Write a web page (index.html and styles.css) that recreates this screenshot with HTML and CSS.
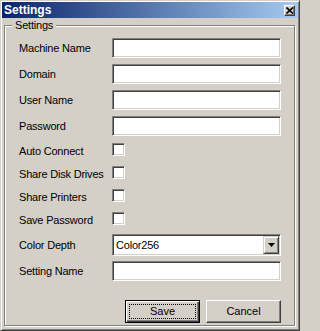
FILE: index.html
```html
<!DOCTYPE html>
<html>
<head>
<meta charset="utf-8">
<link rel="stylesheet" href="styles.css">
</head>
<body>
<div class="window">
  <div class="titlebar">
    <span class="title">Settings</span>
    <span class="close-btn">
      <svg width="8" height="7" viewBox="0 0 8 7"><path d="M0.5 0.5 L7 6.5 M7 0.5 L0.5 6.5" stroke="#000" stroke-width="1.6" fill="none"/></svg>
    </span>
  </div>
  <div class="group">
    <span class="legend">Settings</span>
    <div class="row">
      <label class="label">Machine Name</label>
      <input class="field" type="text">
    </div>
    <div class="row">
      <label class="label">Domain</label>
      <input class="field" type="text">
    </div>
    <div class="row">
      <label class="label">User Name</label>
      <input class="field" type="text">
    </div>
    <div class="row last-text">
      <label class="label">Password</label>
      <input class="field" type="password">
    </div>
    <div class="row check-row">
      <label class="label">Auto Connect</label>
      <input class="check" type="checkbox">
    </div>
    <div class="row check-row">
      <label class="label">Share Disk Drives</label>
      <input class="check" type="checkbox">
    </div>
    <div class="row check-row">
      <label class="label">Share Printers</label>
      <input class="check" type="checkbox">
    </div>
    <div class="row check-row last-check">
      <label class="label">Save Password</label>
      <input class="check" type="checkbox">
    </div>
    <div class="row combo-row">
      <label class="label">Color Depth</label>
      <div class="combo">
        <span class="combo-text">Color256</span>
        <span class="combo-btn">
          <svg width="7" height="4" viewBox="0 0 7 4"><polygon points="0,0 7,0 3.5,4" fill="#000"/></svg>
        </span>
      </div>
    </div>
    <div class="row setting-row">
      <label class="label">Setting Name</label>
      <input class="field" type="text">
    </div>
    <div class="buttons">
      <button class="btn btn-default"><span class="focus">Save</span></button>
      <button class="btn"><span class="plain">Cancel</span></button>
    </div>
  </div>
</div>
</body>
</html>
```

FILE: styles.css
```css
html, body {
  margin: 0;
  padding: 0;
  background: #D4D0C8;
}

body {
  font-family: "Liberation Sans", Arial, sans-serif;
  font-size: 11px;
  color: #000;
}

.window {
  width: 300px;
  height: 331px;
  box-sizing: border-box;
  background: #D4D0C8;
  border: 1px solid;
  border-color: #D4D0C8 #404040 #404040 #D4D0C8;
  box-shadow: inset 1px 1px #fff, inset -1px -1px #808080;
  padding: 1px;
  display: flex;
  flex-direction: column;
}

.titlebar {
  height: 16px;
  flex: none;
  background: linear-gradient(to right, #0A246A, #A6CAF0);
  display: flex;
  align-items: center;
  justify-content: space-between;
  padding: 0 3px 0 2px;
}

.title {
  color: #fff;
  font-weight: bold;
  font-size: 12px;
  line-height: 16px;
}

.close-btn {
  width: 11px;
  height: 11px;
  box-sizing: border-box;
  background: #D4D0C8;
  border: 1px solid;
  border-color: #fff #404040 #404040 #fff;
  box-shadow: inset -1px -1px #808080;
  display: flex;
  align-items: center;
  justify-content: center;
}

.close-btn svg {
  display: block;
}

.group {
  flex: 1;
  margin: 7px 3px 3px 2px;
  border: 1px solid #808080;
  box-shadow: inset 1px 1px #fff, 1px 1px #fff;
  position: relative;
  padding: 12px 13px 0 14px;
  display: flex;
  flex-direction: column;
}

.legend {
  position: absolute;
  top: -7px;
  left: 7px;
  padding: 0 3px;
  line-height: 13px;
  background: #D4D0C8;
  letter-spacing: -0.2px;
}

.row {
  display: flex;
  align-items: center;
  height: 20px;
  margin-bottom: 6px;
}

.row.last-text {
  margin-bottom: 7px;
}

.label {
  width: 93px;
  flex: none;
  white-space: nowrap;
  letter-spacing: -0.2px;
  line-height: 13px;
}

.field {
  flex: 1;
  min-width: 0;
  height: 20px;
  box-sizing: border-box;
  margin: 0;
  padding: 0 3px;
  background: #fff;
  border: 1px solid;
  border-color: #808080 #fff #fff #808080;
  box-shadow: inset 1px 1px #404040, inset -1px -1px #D4D0C8;
  outline: none;
  font: inherit;
}

.check-row {
  height: 13px;
  margin-bottom: 10px;
}

.check-row .label {
  padding-top: 3px;
}

.check-row.last-check {
  margin-bottom: 9px;
}

.check {
  -webkit-appearance: none;
  appearance: none;
  width: 13px;
  height: 13px;
  box-sizing: border-box;
  margin: 0;
  background: #fff;
  border: 1px solid;
  border-color: #808080 #fff #fff #808080;
  box-shadow: inset 1px 1px #404040, inset -1px -1px #D4D0C8;
}

.combo-row {
  height: 22px;
  margin-bottom: 5px;
}

.combo {
  flex: 1;
  height: 22px;
  box-sizing: border-box;
  background: #fff;
  border: 1px solid;
  border-color: #808080 #fff #fff #808080;
  box-shadow: inset 1px 1px #404040, inset -1px -1px #D4D0C8;
  padding: 1px;
  display: flex;
  align-items: center;
}

.combo-text {
  flex: 1;
  padding-left: 2px;
  letter-spacing: -0.2px;
}

.combo-btn {
  width: 16px;
  height: 18px;
  box-sizing: border-box;
  background: #D4D0C8;
  border: 1px solid;
  border-color: #D4D0C8 #404040 #404040 #D4D0C8;
  box-shadow: inset 1px 1px #fff, inset -1px -1px #808080;
  display: flex;
  align-items: center;
  justify-content: center;
}

.combo-btn svg {
  display: block;
}

.setting-row {
  margin-bottom: 19px;
}

.buttons {
  display: flex;
  justify-content: flex-end;
  gap: 6px;
}

.btn {
  width: 75px;
  height: 23px;
  box-sizing: border-box;
  margin: 0;
  padding: 0;
  background: #D4D0C8;
  border: 1px solid;
  border-color: #fff #404040 #404040 #fff;
  box-shadow: inset -1px -1px #808080;
  font: inherit;
  color: #000;
  display: flex;
  align-items: stretch;
  justify-content: stretch;
}

.btn-default {
  border: 1px solid #000;
  box-shadow: inset 1px 1px #fff, inset -1px -1px #404040, inset -2px -2px #808080;
  padding: 3px;
}

.focus {
  flex: 1;
  border: 1px dotted #000;
  display: flex;
  align-items: center;
  justify-content: center;
  line-height: 13px;
}

.plain {
  flex: 1;
  display: flex;
  align-items: center;
  justify-content: center;
  line-height: 13px;
}
```
